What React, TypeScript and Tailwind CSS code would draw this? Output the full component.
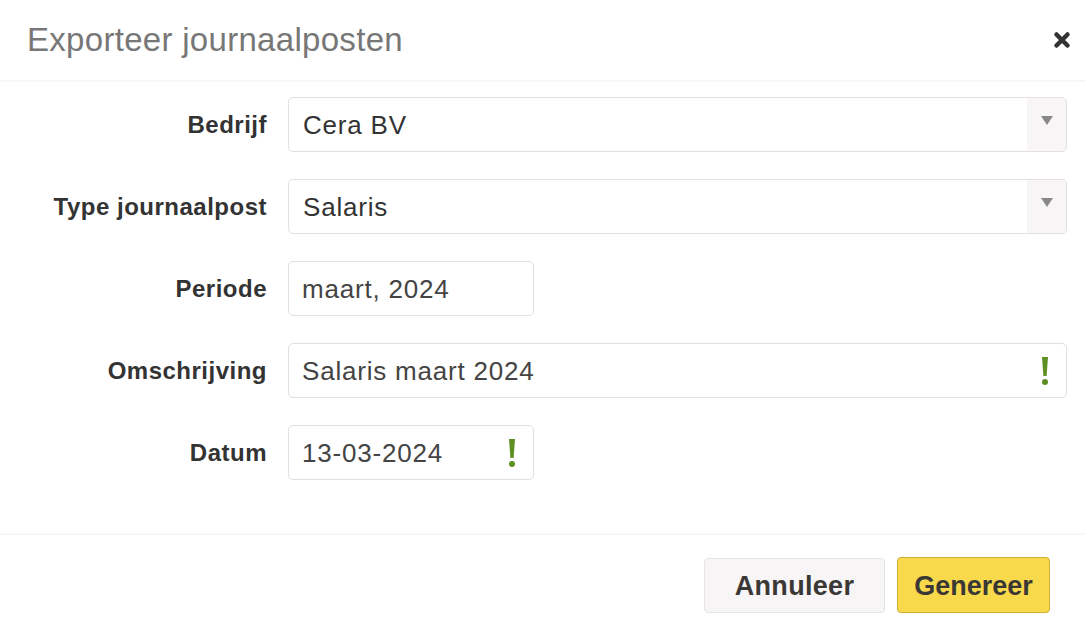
import React from 'react';

const font = { fontFamily: '"Liberation Sans", Arial, sans-serif' };

const Bang: React.FC = () => (
  <svg width="10" height="30" viewBox="0 0 10 30" className="shrink-0">
    <path d="M2 1 H8 L6.6 20 H3.4 Z" fill="#5e8f22" />
    <circle cx="5" cy="26" r="3" fill="#5e8f22" />
  </svg>
);

interface RowProps {
  label: string;
  children: React.ReactNode;
}

const Row: React.FC<RowProps> = ({ label, children }) => (
  <div className="flex items-center">
    <div className="w-[267px] text-right text-[24px] font-bold tracking-[0.5px] text-[#333]">{label}</div>
    <div className="ml-[21px] flex-1">{children}</div>
  </div>
);

const Select: React.FC<{ value: string }> = ({ value }) => (
  <div className="flex h-[55px] w-full items-stretch overflow-hidden rounded-[5px] border border-[#e4dede] bg-white">
    <div className="flex flex-1 items-center pl-[14px] pt-[2px] text-[26px] tracking-[0.8px] text-[#333]">{value}</div>
    <div className="flex w-[39px] items-center justify-center bg-[#f7f5f5] pb-[8px]">
      <svg width="12" height="9" viewBox="0 0 12 9">
        <path d="M0 0 H12 L6 9 Z" fill="#888" />
      </svg>
    </div>
  </div>
);

const Input: React.FC<{ value: string; width?: string; warn?: boolean }> = ({ value, width, warn }) => (
  <div
    className={`flex h-[55px] items-center rounded-[5px] border border-[#e4dede] bg-white pl-[13px] pr-[16px] ${
      width ?? 'w-full'
    }`}
  >
    <div className="flex-1 pt-[2px] text-[26px] tracking-[0.8px] text-[#444]">{value}</div>
    {warn && <Bang />}
  </div>
);

export default function App() {
  return (
    <div className="flex h-[636px] w-[1086px] flex-col bg-white" style={font}>
      <div className="flex h-[82px] items-center justify-between border-b-2 border-[#f7f7f7] pl-[27px] pr-[15px]">
        <h4 className="text-[33px] font-normal tracking-[0.3px] text-[#777]">Exporteer journaalposten</h4>
        <svg width="18" height="18" viewBox="0 0 18 18">
          <path d="M3.5 3.5 L14.5 14.5 M14.5 3.5 L3.5 14.5" stroke="#333" strokeWidth="4.5" strokeLinecap="round" />
        </svg>
      </div>

      <div className="flex flex-col gap-[27px] pb-[53px] pl-0 pr-[19px] pt-[15px]">
        <Row label="Bedrijf">
          <Select value="Cera BV" />
        </Row>
        <Row label="Type journaalpost">
          <Select value="Salaris" />
        </Row>
        <Row label="Periode">
          <Input value="maart, 2024" width="w-[246px]" />
        </Row>
        <Row label="Omschrijving">
          <Input value="Salaris maart 2024" warn />
        </Row>
        <Row label="Datum">
          <Input value="13-03-2024" width="w-[246px]" warn />
        </Row>
      </div>

      <div className="flex justify-end gap-[12px] border-t-2 border-[#f7f7f7] pr-[36px] pt-[23px]">
        <button className="h-[55px] w-[181px] rounded-[4px] border border-[#e6e4e4] bg-[#f7f5f5] pt-[2px] text-[27px] font-bold tracking-[0.3px] text-[#3a3835]">
          Annuleer
        </button>
        <button className="-mt-px h-[56px] w-[153px] rounded-[4px] border border-[#cfae33] bg-[#f8d94b] pt-[2px] text-[27px] font-bold text-[#3a3835]">
          Genereer
        </button>
      </div>
    </div>
  );
}
